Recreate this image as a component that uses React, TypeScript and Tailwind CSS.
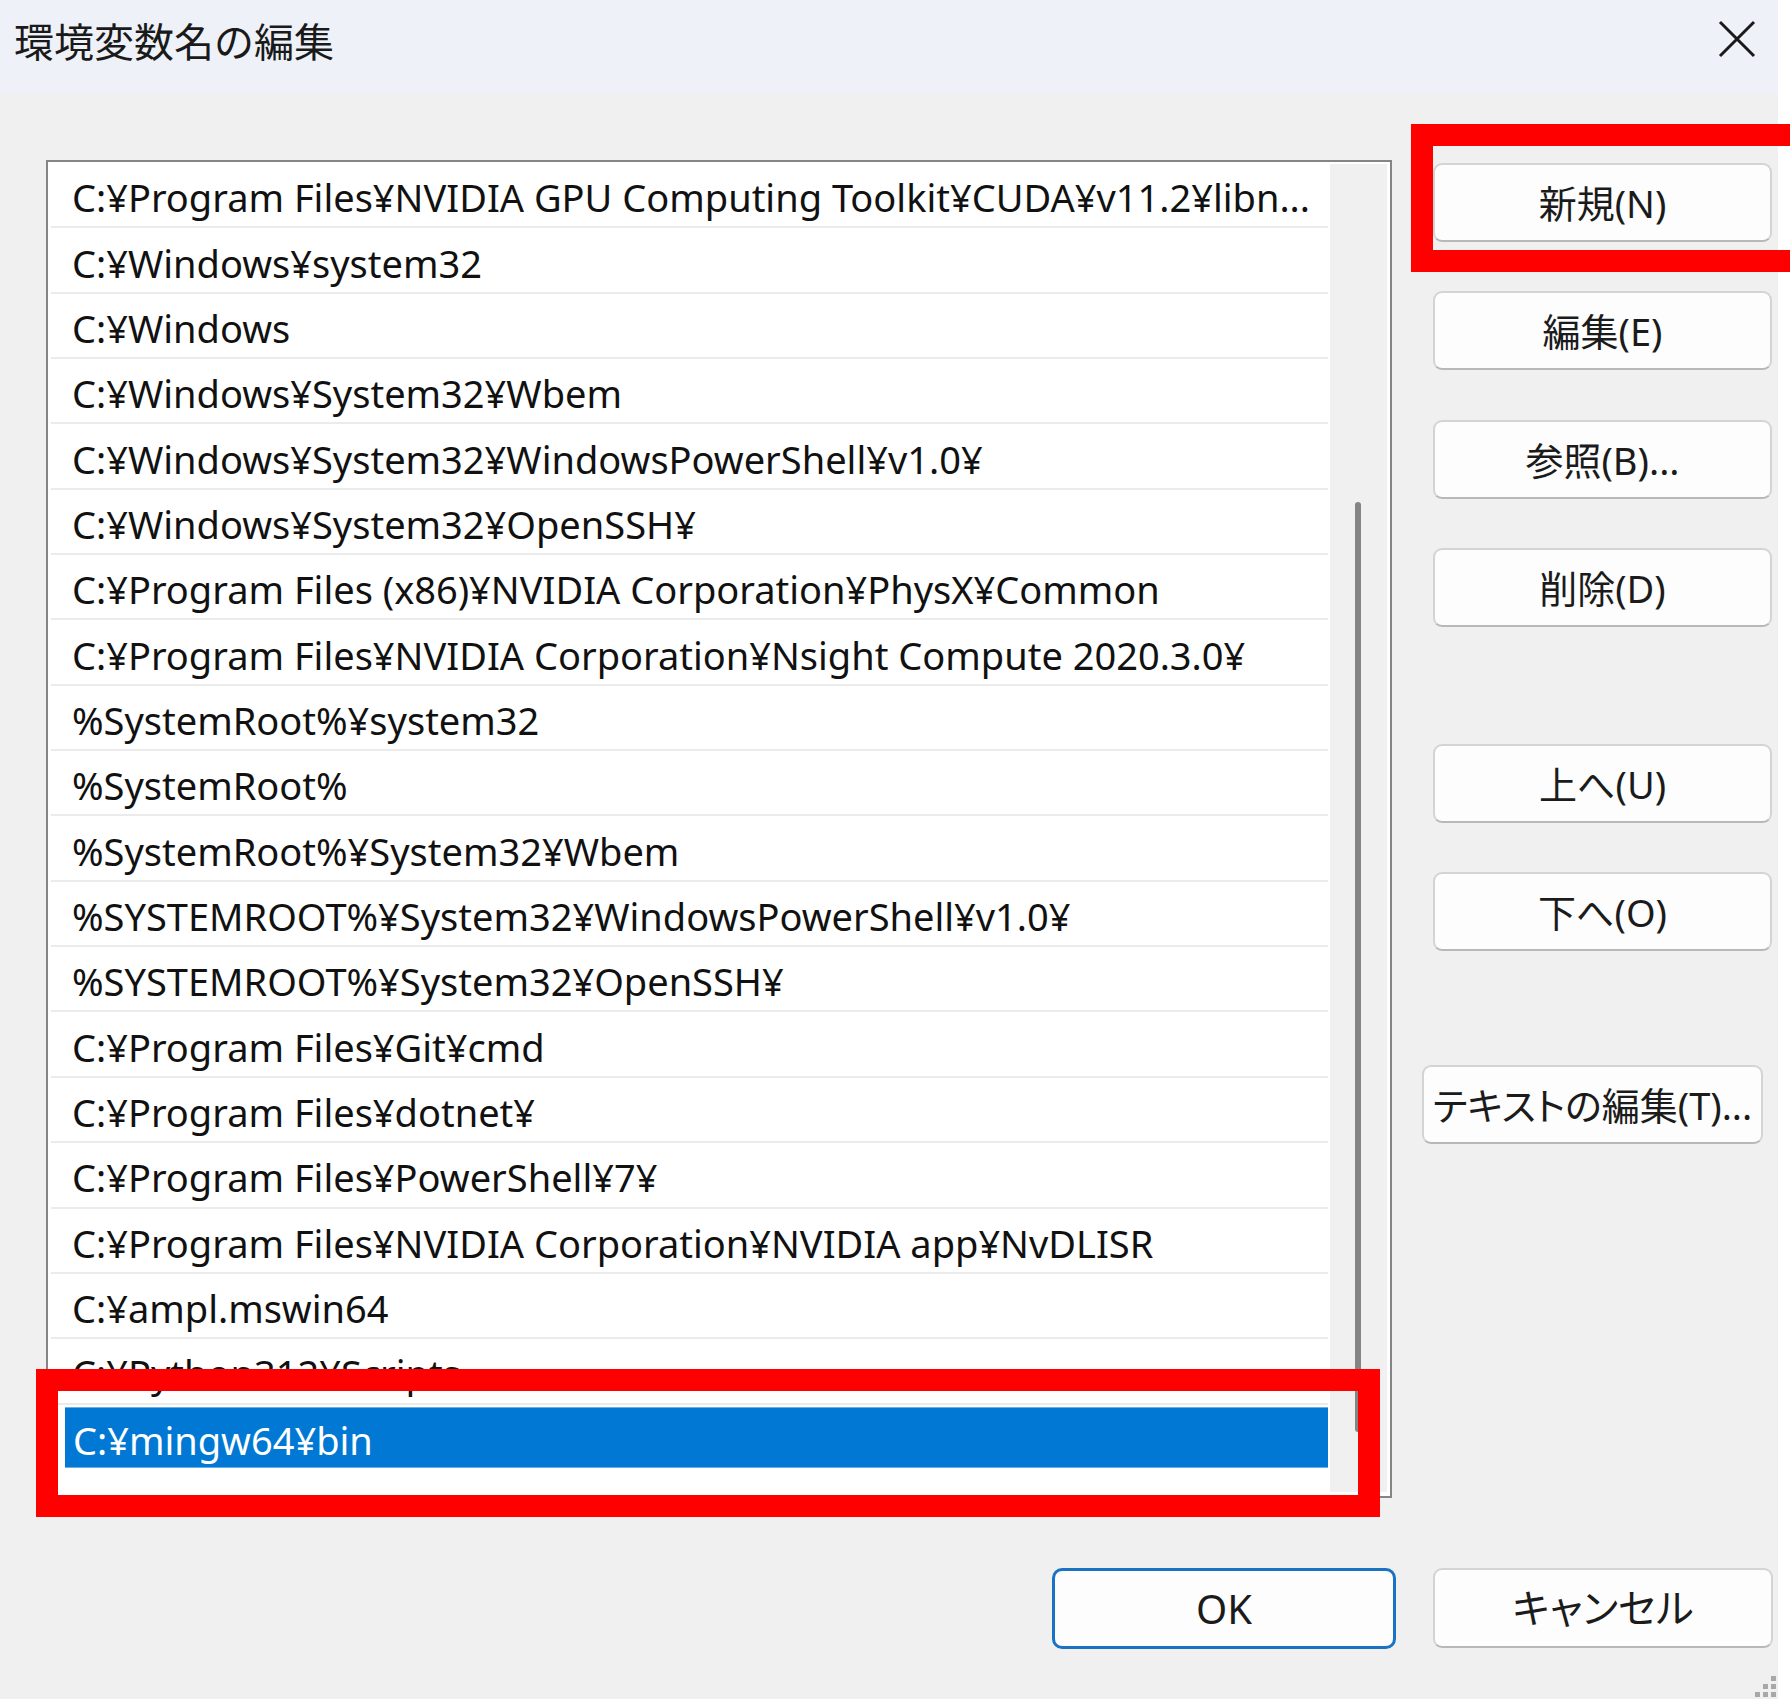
import React from "react";

const rows: string[] = [
  "C:¥Program Files¥NVIDIA GPU Computing Toolkit¥CUDA¥v11.2¥libn...",
  "C:¥Windows¥system32",
  "C:¥Windows",
  "C:¥Windows¥System32¥Wbem",
  "C:¥Windows¥System32¥WindowsPowerShell¥v1.0¥",
  "C:¥Windows¥System32¥OpenSSH¥",
  "C:¥Program Files (x86)¥NVIDIA Corporation¥PhysX¥Common",
  "C:¥Program Files¥NVIDIA Corporation¥Nsight Compute 2020.3.0¥",
  "%SystemRoot%¥system32",
  "%SystemRoot%",
  "%SystemRoot%¥System32¥Wbem",
  "%SYSTEMROOT%¥System32¥WindowsPowerShell¥v1.0¥",
  "%SYSTEMROOT%¥System32¥OpenSSH¥",
  "C:¥Program Files¥Git¥cmd",
  "C:¥Program Files¥dotnet¥",
  "C:¥Program Files¥PowerShell¥7¥",
  "C:¥Program Files¥NVIDIA Corporation¥NVIDIA app¥NvDLISR",
  "C:¥ampl.mswin64",
  "C:¥Python312¥Scripts",
];

const FONT = { fontFamily: "'Noto Sans', 'Noto Sans CJK JP', sans-serif" };

function Btn({ label, className = "" }: { label: string; className?: string }) {
  return (
    <div
      className={
        "h-[79px] rounded-[9px] border-2 border-[#d4d4d4] border-b-[#b8b8b8] bg-[#fdfdfd] flex items-center justify-center text-[38px] leading-none text-[#1b1b1b] whitespace-nowrap [font-feature-settings:'palt'] " +
        className
      }
    >
      {label}
    </div>
  );
}

export default function App() {
  return (
    <div className="relative w-[1790px] h-[1699px] bg-white overflow-hidden" style={FONT}>
      <div className="w-[1778px] h-full flex flex-col">
        {/* Title bar */}
        <div className="h-[94px] bg-[#eef2f8] flex items-start justify-between shrink-0">
          <div
            className="pl-[14px] pt-[16px] text-[40px] leading-[48px] text-[#1a1a1a]"
            style={{ fontFamily: "'Noto Sans CJK JP', sans-serif" }}
          >
            環境変数名の編集
          </div>
          <svg className="mt-[20px] mr-[22px]" width="38" height="38" viewBox="0 0 38 38">
            <path d="M2 2 L36 36 M36 2 L2 36" stroke="#1a1a1a" strokeWidth="3" fill="none" />
          </svg>
        </div>

        {/* Body */}
        <div className="flex-1 bg-[#f0f0f0] relative pl-[46px] pr-[5px] pt-[66px]">
          <div className="flex items-start">
            {/* List box */}
            <div className="w-[1346px] h-[1338px] border-2 border-[#858585] bg-white flex shrink-0">
              <div className="flex-1 pl-[3px] pr-[2px] pt-[1px] flex flex-col">
                {rows.map((r, i) => (
                  <div
                    key={i}
                    className="h-[65.35px] shrink-0 border-b-2 border-[#ebebeb] flex items-center pl-[21px] pt-[5px] text-[38px] leading-none text-[#111] whitespace-nowrap overflow-hidden"
                  >
                    {r}
                  </div>
                ))}
                <div className="h-[65.35px] shrink-0 flex items-center pl-[14px]">
                  <div className="w-full h-[61px] bg-[#0078d4] border-t border-b border-[#6aaee8] flex items-center pl-[8px] pt-[5px] text-[38px] leading-none text-white whitespace-nowrap">
                    C:¥mingw64¥bin
                  </div>
                </div>
              </div>
              <div className="w-[57px] mr-[3px] mt-[2px] mb-[4px] bg-[#f0f0f0] relative shrink-0">
                <div className="absolute left-[25px] top-[338px] w-[6px] h-[930px] rounded-full bg-[#858585]" />
              </div>
            </div>

            {/* Right buttons */}
            <div className="ml-[41px] w-[339px] pt-[3px] flex flex-col">
              <Btn label="新規(N)" />
              <Btn label="編集(E)" className="mt-[49px]" />
              <Btn label="参照(B)..." className="mt-[50px]" />
              <Btn label="削除(D)" className="mt-[49px]" />
              <Btn label="上へ(U)" className="mt-[117px]" />
              <Btn label="下へ(O)" className="mt-[49px]" />
              <Btn label="テキストの編集(T)..." className="mt-[114px] -ml-[11px] w-[341px]" />
            </div>
          </div>

          {/* Bottom buttons */}
          <div className="flex justify-end gap-[37px] mt-[70px]">
            <div className="w-[344px] h-[81px] rounded-[10px] border-[3px] border-[#1a72c4] bg-[#fdfdfd] flex items-center justify-center text-[40px] leading-none text-[#1b1b1b]">
              OK
            </div>
            <Btn label="キャンセル" className="w-[340px] h-[80px] text-[40px]" />
          </div>

          {/* Resize grip */}
          <div className="absolute right-[2px] bottom-[2px] grid grid-cols-3 gap-[3px]">
            <span className="w-[5px] h-[5px]" />
            <span className="w-[5px] h-[5px]" />
            <span className="w-[5px] h-[5px] bg-[#a8a8a8]" />
            <span className="w-[5px] h-[5px]" />
            <span className="w-[5px] h-[5px] bg-[#a8a8a8]" />
            <span className="w-[5px] h-[5px] bg-[#a8a8a8]" />
            <span className="w-[5px] h-[5px] bg-[#a8a8a8]" />
            <span className="w-[5px] h-[5px] bg-[#a8a8a8]" />
            <span className="w-[5px] h-[5px] bg-[#a8a8a8]" />
          </div>
        </div>
      </div>

      {/* Red annotation boxes */}
      <div className="absolute left-[1411px] top-[124px] w-[401px] h-[148px] border-[22px] border-[#ff0000]" />
      <div className="absolute left-[36px] top-[1369px] w-[1344px] h-[148px] border-[22px] border-[#ff0000]" />
    </div>
  );
}
